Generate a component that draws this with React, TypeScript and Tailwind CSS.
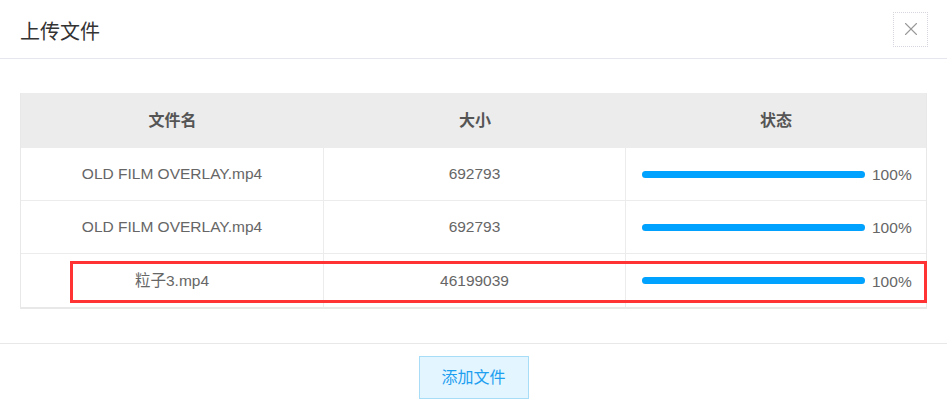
import { X } from 'lucide-react';

interface UploadFile {
  name: string;
  size: number;
  percent: number;
}

const files: UploadFile[] = [
  { name: 'OLD FILM OVERLAY.mp4', size: 692793, percent: 100 },
  { name: 'OLD FILM OVERLAY.mp4', size: 692793, percent: 100 },
  { name: '粒子3.mp4', size: 46199039, percent: 100 },
];

function ProgressCell({ percent }: { percent: number }) {
  return (
    <div className="flex items-center pl-[16px]">
      <div className="h-[7px] w-[223px] rounded-full bg-[#e8e8e8]">
        <div className="h-full rounded-full bg-[#00a2ff]" style={{ width: `${percent}%` }} />
      </div>
      <span className="ml-[7px] text-[15.5px] text-[#666] pt-[2px]">{percent}%</span>
    </div>
  );
}

export default function App() {
  return (
    <div
      className="w-[947px] h-[415px] bg-white overflow-hidden"
      style={{ fontFamily: '"Liberation Sans", "Noto Sans CJK SC", sans-serif' }}
    >
      {/* header */}
      <div className="h-[59px] flex items-center justify-between pl-5 pr-[19px] border-b border-[#e6e6ee]">
        <h2 className="text-[20px] text-[#333] pt-[6px]">上传文件</h2>
        <button className="w-[35px] h-[35px] flex items-center justify-center border border-dotted border-[#d6d6de] text-[#999]">
          <X size={22} strokeWidth={1.2} />
        </button>
      </div>

      {/* body */}
      <div className="px-5 pt-[34px] pb-[34px] border-b border-[#e8e8e8]">
        <div className="relative border-x border-b-2 border-[#e8e8e8]">
          <div className="grid grid-cols-[303px_302px_1fr] h-[55px] bg-[#ececec] items-center text-center text-[16px] font-bold text-[#555]">
            <div>文件名</div>
            <div>大小</div>
            <div>状态</div>
          </div>
          {files.map((f, i) => (
            <div
              key={i}
              className={`grid grid-cols-[303px_302px_1fr] h-[53px] text-[15.5px] text-[#666] ${i < files.length - 1 ? 'border-b border-[#ececec]' : ''}`}
            >
              <div className="flex items-center justify-center border-r border-[#ececec]">{f.name}</div>
              <div className="flex items-center justify-center border-r border-[#ececec]">{f.size}</div>
              <ProgressCell percent={f.percent} />
            </div>
          ))}
          {/* annotation box */}
          <div className="absolute left-[49px] right-[-1px] top-[168px] h-[42px] border-[3px] border-[#f33] pointer-events-none" />
        </div>
      </div>

      {/* footer */}
      <div className="flex justify-center pt-3">
        <button className="w-[110px] h-[43px] bg-[#e3f5fe] border border-[#a8ddf8] text-[#1ea0f0] text-[16px]">
          添加文件
        </button>
      </div>
    </div>
  );
}
